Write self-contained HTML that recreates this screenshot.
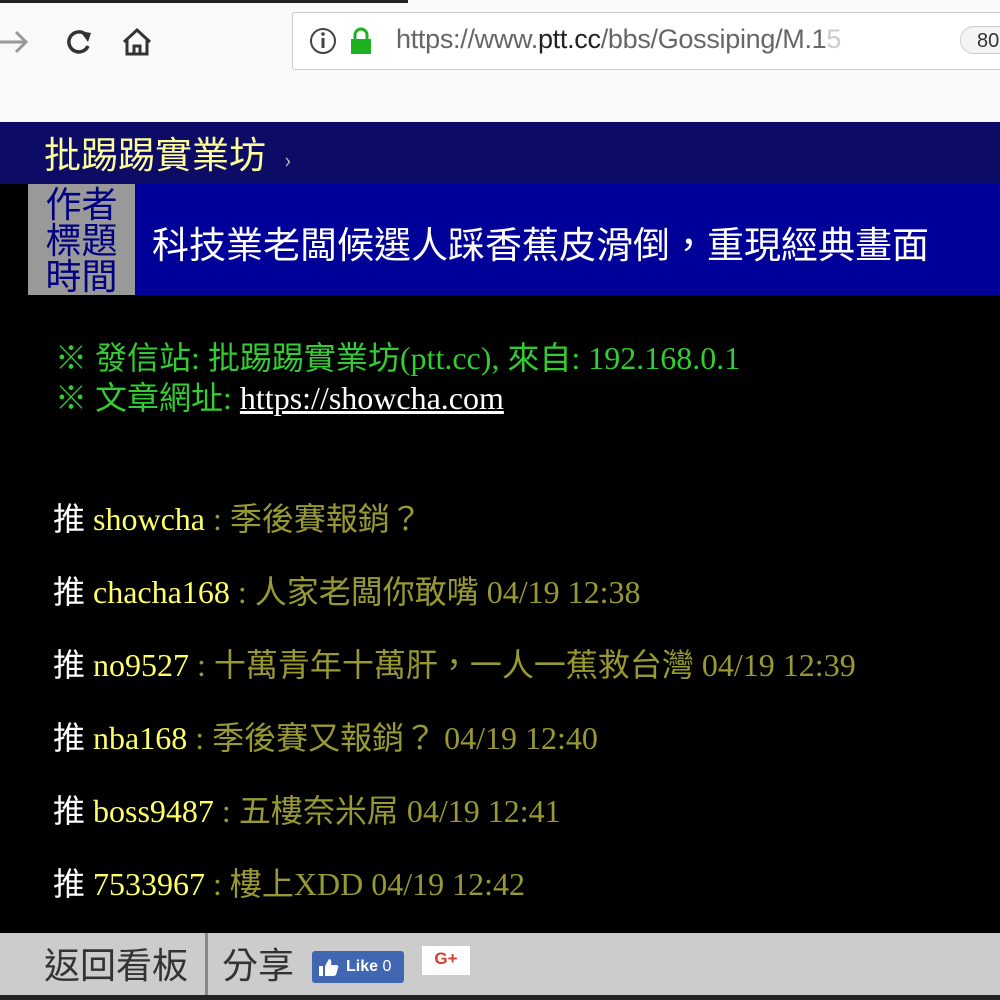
<!DOCTYPE html>
<html><head><meta charset="utf-8"><style>
body{margin:0;width:1000px;height:1000px;overflow:hidden;background:#000;font-family:"Liberation Serif","Noto Sans CJK TC",serif;position:relative}
.a{position:absolute;white-space:nowrap}
</style></head><body>
<div class="a" style="left:0;top:0;width:1000px;height:122px;background:#f9f9f9"></div>
<div class="a" style="left:0;top:0;width:408px;height:3px;background:#222"></div>
<svg class="a" style="left:0;top:24px" width="170" height="36">
<path d="M0 18 H26 M16 8 L26 18 L16 28" stroke="#999" stroke-width="3" fill="none"/>
<path d="M85 10 A10 10 0 1 0 88 22" stroke="#333" stroke-width="3.5" fill="none"/><path d="M80 7 L91 9 L88 18 Z" fill="#333"/>
<path d="M124 18 L137 6 L150 18 M127 16 V30 H147 V16 M134 30 V22 H140 V30" stroke="#333" stroke-width="3" fill="none"/>
</svg>
<div class="a" style="left:292px;top:12px;width:720px;height:56px;background:#fff;border:1px solid #ccc;border-radius:3px"></div>
<svg class="a" style="left:308px;top:26px" width="70" height="30"><circle cx="15" cy="15" r="12" stroke="#444" stroke-width="2" fill="none"/><rect x="13.5" y="12" width="3" height="10" fill="#444"/><circle cx="15" cy="8" r="1.8" fill="#444"/><rect x="43" y="13" width="20" height="15" fill="#1fb11f"/><path d="M47 13 V9 A6 6 0 0 1 59 9 V13" stroke="#1fb11f" stroke-width="3" fill="none"/></svg>
<div class="a" style="left:396px;top:24px;font:27px 'Liberation Sans',sans-serif;color:#666;letter-spacing:-0.3px">https://www.<span style="color:#222">ptt.cc</span>/bbs/Gossiping/M.1<span style="color:#ccc">5</span></div>
<div class="a" style="left:960px;top:26px;width:60px;height:28px;border:1px solid #ccc;border-radius:14px;background:#f4f4f4;font:20px 'Liberation Sans',sans-serif;color:#333;padding:0 0 0 16px;line-height:28px;box-sizing:border-box">80</div>
<div class="a" style="left:0;top:122px;width:1000px;height:62px;background:#0c0c66"></div>
<div class="a" style="left:44px;top:128px;font-size:37px;color:#ffff99;font-family:'Noto Sans CJK TC',sans-serif;line-height:48px">批踢踢實業坊 <span style="font-size:22px;color:#bbb;margin-left:10px">›</span></div>
<div class="a" style="left:0;top:184px;width:1000px;height:111px;background:#000099"></div>
<div class="a" style="left:0;top:184px;width:28px;height:111px;background:#000"></div>
<div class="a" style="left:28px;top:184px;width:107px;height:111px;background:#999;color:#000080;font:36px/36px 'Noto Sans CJK TC',sans-serif;text-align:center;overflow:hidden">作者<br>標題<br>時間</div>
<div class="a" style="left:152px;top:218px;font:37px/48px 'Noto Sans CJK TC',sans-serif;color:#fff">科技業老闆候選人踩香蕉皮滑倒，重現經典畫面</div>
<div class="a" style="left:55px;top:338px;font-size:32px;line-height:40px;color:#33cc33">※ 發信站: 批踢踢實業坊(ptt.cc), 來自: 192.168.0.1<br>※ 文章網址: <span style="color:#fff;text-decoration:underline">https://showcha.com</span></div>
<div class="a" style="left:53px;top:483px;font-size:32px;line-height:73px;color:#999933">
<div><span style="color:#fff">推</span> <span style="color:#ffff66">showcha</span> : 季後賽報銷？</div>
<div><span style="color:#fff">推</span> <span style="color:#ffff66">chacha168</span> : 人家老闆你敢嘴 04/19 12:38</div>
<div><span style="color:#fff">推</span> <span style="color:#ffff66">no9527</span> : 十萬青年十萬肝，一人一蕉救台灣 04/19 12:39</div>
<div><span style="color:#fff">推</span> <span style="color:#ffff66">nba168</span> : 季後賽又報銷？ 04/19 12:40</div>
<div><span style="color:#fff">推</span> <span style="color:#ffff66">boss9487</span> : 五樓奈米屌 04/19 12:41</div>
<div><span style="color:#fff">推</span> <span style="color:#ffff66">7533967</span> : 樓上XDD 04/19 12:42</div>
</div>
<div class="a" style="left:0;top:933px;width:1000px;height:62px;background:#cccccc"></div>
<div class="a" style="left:44px;top:939px;font:36px/48px 'Noto Sans CJK TC',sans-serif;color:#333">返回看板</div>
<div class="a" style="left:205px;top:933px;width:3px;height:62px;background:#888"></div>
<div class="a" style="left:222px;top:939px;font:36px/48px 'Noto Sans CJK TC',sans-serif;color:#333">分享</div>
<div class="a" style="left:312px;top:951px;width:92px;height:32px;background:#4267b2;border-radius:3px;color:#fff;font:bold 16px/32px 'Liberation Sans',sans-serif;padding-left:34px;box-sizing:border-box">Like <span style="font-weight:normal">0</span></div>
<svg class="a" style="left:318px;top:957px" width="22" height="20"><path d="M1 9 H5 V19 H1 Z M7 9 L11 2 Q14 2 13 8 H19 Q21 9 20 11 L18 18 Q17 19 15 19 H7 Z" fill="#fff"/></svg>
<div class="a" style="left:422px;top:946px;width:48px;height:29px;background:#fff;color:#d23f31;font:bold 17px/26px 'Liberation Sans',sans-serif;text-align:center">G+</div>
<div class="a" style="left:0;top:995px;width:1000px;height:5px;background:#222"></div>
</body></html>
